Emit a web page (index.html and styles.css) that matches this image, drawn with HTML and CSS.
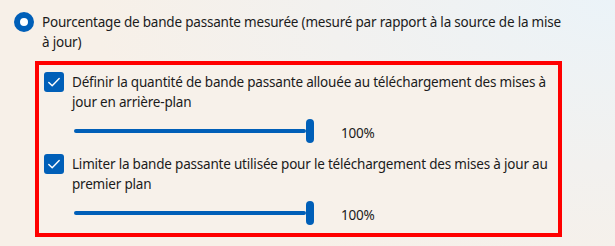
FILE: index.html
```html
<!DOCTYPE html>
<html lang="fr">
<head>
    <meta charset="UTF-8">
    <meta name="viewport" content="width=device-width, initial-scale=1.0">
    <title>Optimisation de la distribution</title>
    <link rel="stylesheet" href="styles.css">
</head>
<body>
    <div class="option">
        <span class="radio"></span>
        <span class="option-label">Pourcentage de bande passante mesurée (mesuré par rapport à la source de la mise à jour)</span>
    </div>

    <div class="highlight">
        <div class="check-row">
            <span class="checkbox">
                <svg width="20" height="20" viewBox="0 0 20 20"><path d="M4.8 10.4 L8.2 13.8 L15.2 6.4" fill="none" stroke="#fff" stroke-width="1.4" stroke-linecap="round" stroke-linejoin="round"/></svg>
            </span>
            <span class="check-label">Définir la quantité de bande passante allouée au téléchargement des mises à jour en arrière-plan</span>
        </div>
        <div class="slider-row">
            <div class="slider">
                <div class="track"></div>
                <div class="thumb"></div>
            </div>
            <span class="value">100%</span>
        </div>

        <div class="check-row second">
            <span class="checkbox">
                <svg width="20" height="20" viewBox="0 0 20 20"><path d="M4.8 10.4 L8.2 13.8 L15.2 6.4" fill="none" stroke="#fff" stroke-width="1.4" stroke-linecap="round" stroke-linejoin="round"/></svg>
            </span>
            <span class="check-label">Limiter la bande passante utilisée pour le téléchargement des mises à jour au premier plan</span>
        </div>
        <div class="slider-row">
            <div class="slider">
                <div class="track"></div>
                <div class="thumb"></div>
            </div>
            <span class="value">100%</span>
        </div>
    </div>
</body>
</html>
```

FILE: styles.css
```css
html, body {
    height: 100%;
}
body {
    margin: 0;
    font-family: "Noto Sans", "Open Sans", sans-serif;
    font-size: 13.5px;
    letter-spacing: -0.2px;
    line-height: 20px;
    color: #1b1b1b;
    background: radial-gradient(ellipse 520px 300px at 100% 0%, #ebf3f8 0%, #f2f1ef 55%, #f7f0e8 100%);
    background-color: #f7f0e8;
    overflow: hidden;
}
.option {
    display: flex;
    align-items: flex-start;
    gap: 8px;
    padding: 12px 0 0 14px;
}
.radio {
    flex: none;
    width: 20px;
    height: 20px;
    box-sizing: border-box;
    border: 6px solid #005fb8;
    border-radius: 50%;
    background-color: #fff;
}
.option-label {
    width: 523px;
}
.highlight {
    box-sizing: border-box;
    width: 527px;
    margin: 9px 0 0 35px;
    padding: 7px 5px 8px 5px;
    border: 4px solid #ff0000;
    background-color: #f7f1ea;
}
.check-row {
    display: flex;
    align-items: flex-start;
    gap: 8px;
}
.check-row.second {
    margin-top: 11px;
}
.checkbox {
    flex: none;
    width: 20px;
    height: 20px;
    border-radius: 3px;
    background-color: #005fb8;
}
.checkbox svg {
    display: block;
}
.check-label {
    flex: 1;
}
.slider-row {
    display: flex;
    align-items: center;
    margin: 7px 0 0 30px;
    height: 24px;
}
.slider {
    display: flex;
    align-items: center;
    width: 240px;
}
.track {
    flex: 1;
    height: 4px;
    border-radius: 2px;
    background-color: #005fb8;
}
.thumb {
    width: 8px;
    height: 24px;
    border-radius: 4px;
    background-color: #005fb8;
}
.value {
    margin-left: 27px;
    padding-top: 3px;
}
```
